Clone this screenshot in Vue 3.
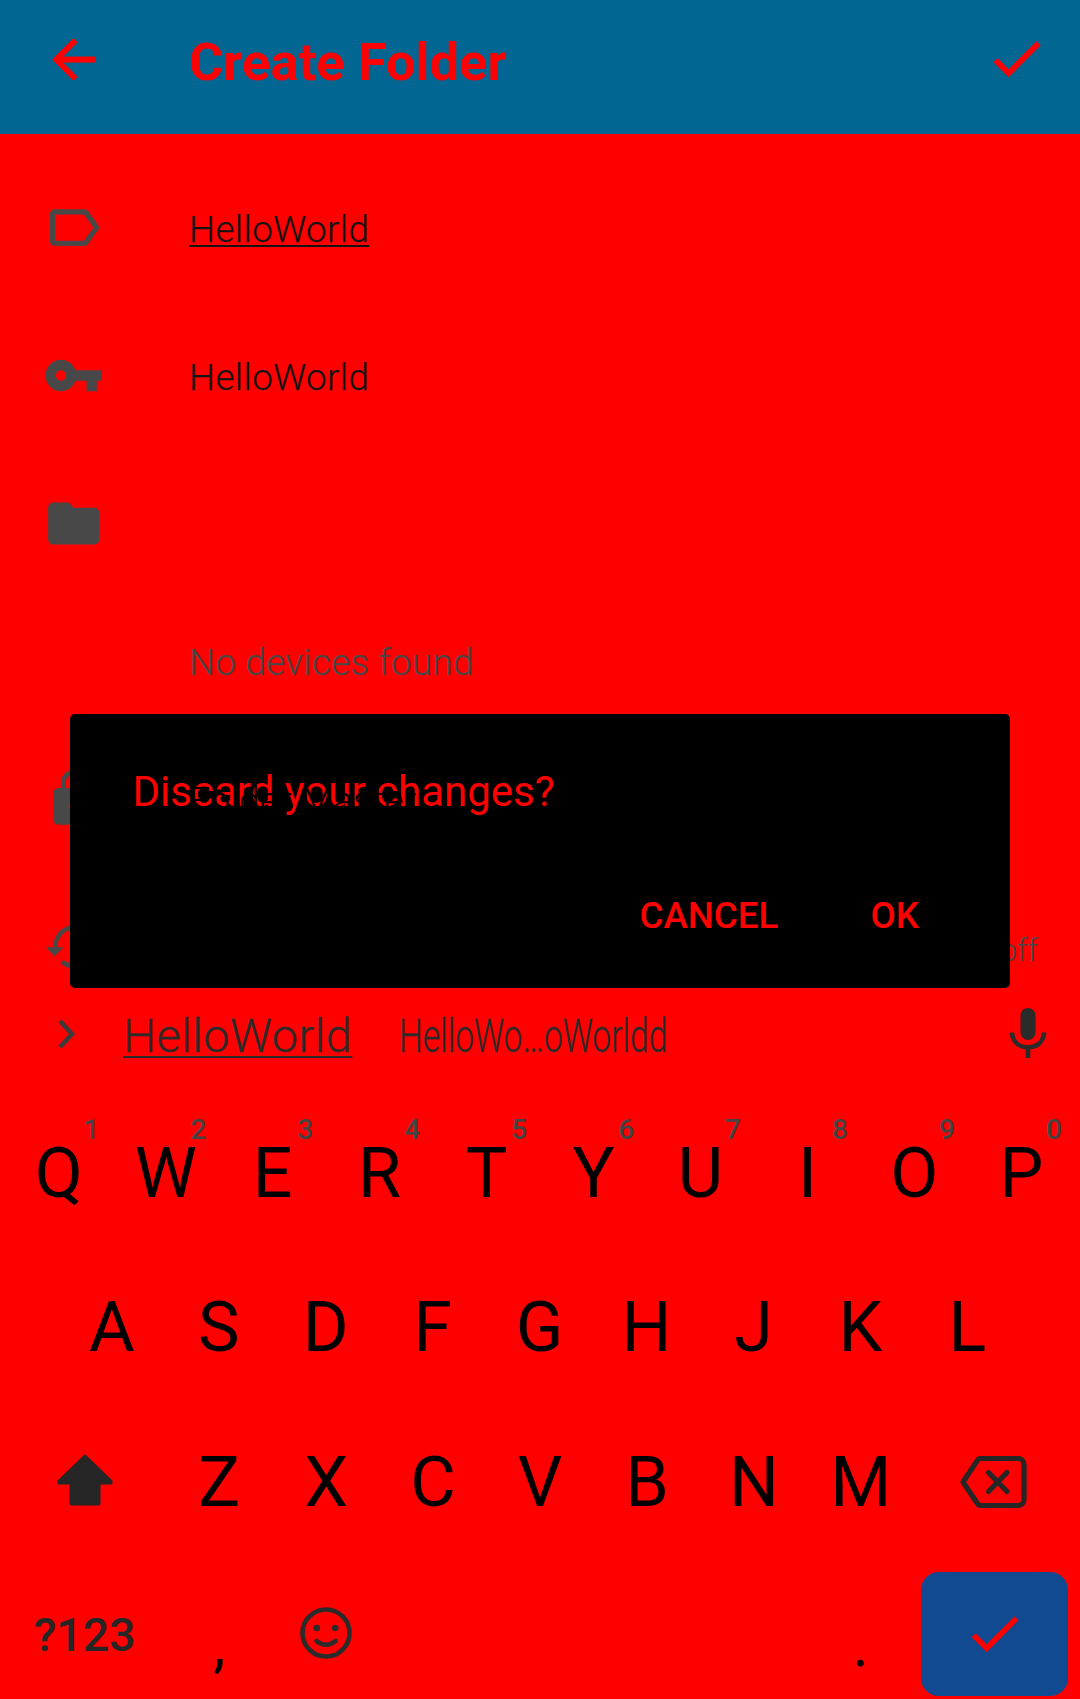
<script setup>
const topRow = [...'QWERTYUIOP'].map((label, i) => ({ label, hint: (i + 1) % 10 }))
const homeRow = [...'ASDFGHJKL']
const lowerRow = [...'ZXCVBNM']
</script>

<template>
  <div class="screen">
    <header class="bar">
      <svg class="icon" viewBox="0 0 24 24"><path d="M20 11H7.83l5.59-5.59L12 4l-8 8 8 8 1.41-1.41L7.83 13H20v-2z" /></svg>
      <h1>Create Folder</h1>
      <svg class="icon save" viewBox="0 0 24 24"><path d="M9 16.17L4.83 12l-1.42 1.41L9 19 21 7l-1.41-1.41z" /></svg>
    </header>

    <main class="form">
      <div class="row">
        <svg class="icon tag" viewBox="0 0 24 24" preserveAspectRatio="none"><path d="M17.63 5.84C17.27 5.33 16.67 5 16 5L5 5.01C3.9 5.01 3 5.9 3 7v10c0 1.1.9 1.99 2 1.99L16 19c.67 0 1.27-.33 1.63-.84L22 12l-4.37-6.16zM16 17H5V7h11l3.55 5L16 17z" /></svg>
        <span class="value underlined">HelloWorld</span>
      </div>
      <div class="row">
        <svg class="icon" viewBox="0 0 24 24" preserveAspectRatio="none"><path d="M12.65 10C11.83 7.67 9.61 6 7 6c-3.31 0-6 2.69-6 6s2.69 6 6 6c2.61 0 4.83-1.67 5.65-4H17v4h4v-4h2v-4H12.65zM7 14c-1.1 0-2-.9-2-2s.9-2 2-2 2 .9 2 2-.9 2-2 2z" /></svg>
        <span class="value">HelloWorld</span>
      </div>
      <div class="row">
        <svg class="icon" viewBox="0 0 24 24" preserveAspectRatio="none"><path d="M10 4H4c-1.1 0-1.99.9-1.99 2L2 18c0 1.1.9 2 2 2h16c1.1 0 2-.9 2-2V8c0-1.1-.9-2-2-2h-8l-2-2z" /></svg>
      </div>
      <div class="row devices"><span class="value muted">No devices found</span></div>
      <div class="row master">
        <svg class="icon" viewBox="0 0 24 24" preserveAspectRatio="none"><path d="M18 8h-1V6c0-2.76-2.24-5-5-5S7 3.24 7 6v2H6c-1.1 0-2 .9-2 2v10c0 1.1.9 2 2 2h12c1.1 0 2-.9 2-2V10c0-1.1-.9-2-2-2zm-6 9c-1.1 0-2-.9-2-2s.9-2 2-2 2 .9 2 2-.9 2-2 2zm3.1-9H8.900V6c0-1.710 1.390-3.100 3.100-3.100 1.710 0 3.100 1.390 3.100 3.100v2z" /></svg>
        <span class="value over">Folder Master</span>
      </div>
      <div class="row versioning">
        <svg class="icon" viewBox="0 0 24 24" preserveAspectRatio="none"><path d="M11.300 3.900a8 8 0 0 0-7.250 8.350H1.100l3.450 3.450L8 12.250H5.750a6.300 6.300 0 0 1 5.550-6.650zM7.900 17l-1.100 1.500a8.500 8.500 0 0 0 5.200 1.800v-1.800a7 7 0 0 1-4.100-1.500z" /></svg>
        <span class="state">off</span>
      </div>
    </main>

    <section class="keyboard">
      <div class="suggestions">
        <svg class="chevron" viewBox="0 0 20 32"><path d="M3 3l12 13L3 29" /></svg>
        <span class="word underlined">HelloWorld</span>
        <span class="slot"><span class="word narrow">HelloWo…oWorldd</span></span>
        <svg class="mic" viewBox="0 0 38 50"><rect x="11.500" y="0" width="15" height="32" rx="7.500" /><path d="M2.800 24.500c1 9.500 7.500 14.700 16.200 14.700s15.200-5.200 16.200-14.700M19 39v11" /></svg>
      </div>
      <div class="keys">
        <span v-for="k in topRow" :key="k.label" class="key">{{ k.label }}<sup>{{ k.hint }}</sup></span>
      </div>
      <div class="keys home">
        <span v-for="k in homeRow" :key="k" class="key">{{ k }}</span>
      </div>
      <div class="keys lower">
        <span class="key wide">
          <svg class="shift" viewBox="0 0 56 52"><path d="M28 1.500L54.500 27v2.500H42.500V49a1.500 1.500 0 0 1-1.500 1.500H15a1.500 1.500 0 0 1-1.500-1.500V29.500H1.500V27z" /></svg>
        </span>
        <span v-for="k in lowerRow" :key="k" class="key">{{ k }}</span>
        <span class="key wide">
          <svg class="erase" viewBox="0 0 67 52"><path d="M20.500 2.500H58a6 6 0 0 1 6 6v35a6 6 0 0 1-6 6H20.500q-2 0-3.200-2L3 26 17.300 4.500q1.200-2 3.200-2z" /><path d="M28.500 16.500l18.500 19M47 16.500l-18.500 19" /></svg>
        </span>
      </div>
      <div class="keys bottom">
        <span class="key wide symbols">?123</span>
        <span class="key mark">,</span>
        <span class="key">
          <svg class="smile" viewBox="0 0 52 52"><circle class="line" cx="26" cy="26" r="23.500" /><circle cx="16.700" cy="21" r="3.300" /><circle cx="35.300" cy="21" r="3.300" /><path class="line" d="M16.500 34q9.500 7.500 19 0" /></svg>
        </span>
        <span class="space"></span>
        <span class="key mark">.</span>
        <span class="enter"><svg viewBox="0 0 24 24"><path d="M9 16.170L4.830 12l-1.420 1.410L9 19 21 7l-1.410-1.410z" /></svg></span>
      </div>
    </section>

    <div class="dialog">
      <p>Discard your changes?</p>
      <div class="actions"><span>CANCEL</span><span>OK</span></div>
    </div>
  </div>
</template>

<style>
body { margin: 0; }
</style>

<style scoped>
.screen {
  position: relative;
  width: 1080px;
  height: 1699px;
  overflow: hidden;
  background: #f00;
  font-family: Roboto, "Liberation Sans", sans-serif;
  color: #000;
}
.icon { width: 63px; height: 63px; flex: none; display: block; }
.bar {
  height: 133.500px;
  box-sizing: border-box;
  padding: 28px 32px 0 42px;
  display: flex;
  align-items: flex-start;
  background: #026693;
  color: #f00;
}
.bar .icon { fill: #f00; }
.bar .icon path { stroke: #f00; stroke-width: .3; }
.bar h1 { margin: 4px 0 0 84px; font-size: 52.500px; line-height: 60px; font-weight: 700; white-space: nowrap; }
.bar .save { margin: -1px 0 0 auto; }
.form { padding-top: 22px; height: 841.500px; }
.row {
  height: 148px;
  box-sizing: border-box;
  padding: 0 42px 0 43px;
  display: flex;
  align-items: center;
}
.row .icon { width: 61.500px; fill: #484848; margin: -5px 1.500px 0 0; }
.row .tag { margin-left: -1px; width: 63px; margin-right: 1px; }
.value { margin: 0 0 0 83px; font-size: 36.750px; line-height: 44px; font-weight: 300; letter-spacing: .42px; -webkit-text-stroke: .25px currentColor; color: #141414; white-space: nowrap; }
.underlined { text-decoration: underline; text-decoration-thickness: 2px; text-underline-offset: 3px; text-decoration-skip-ink: none; }
.devices { height: 126px; }
.devices .value { margin-left: 146px; letter-spacing: .3px; }
.value.muted { color: #484848; }
.master { height: 151px; }
.value.over { position: relative; z-index: 3; color: #000; letter-spacing: .3px; }
.versioning { height: 120.500px; padding-top: 20px; }
.versioning .icon { margin-top: -1px; }
.state { margin: 9px 0 0 auto; font-size: 31.500px; line-height: 36px; font-weight: 300; color: #484848; }

.suggestions { height: 77px; padding: 0 33px 0 57px; display: flex; align-items: center; }
.chevron { width: 20px; height: 32px; margin-top: -3px; flex: none; fill: none; stroke: #3b3b3b; stroke-width: 4.500; }
.word { font-size: 46.700px; line-height: 56px; color: #2b2b2b; font-weight: 300; white-space: nowrap; -webkit-text-stroke: .3px currentColor; }
.suggestions > .word { width: 229px; margin: 0 0 0 46px; text-underline-offset: 4px; letter-spacing: .55px; }
.slot { width: 268px; margin: 0 0 0 46.500px; }
.narrow { display: inline-block; transform: scaleX(.719); transform-origin: left; }
.mic { width: 38px; height: 50px; margin: -5px 0 0 auto; flex: none; fill: #2b2b2b; }
.mic path { fill: none; stroke: #2b2b2b; stroke-width: 4.600; }
.keys { height: 155px; padding: 0 5.400px; display: flex; align-items: center; }
.suggestions + .keys { margin-top: 21.500px; }
.key { position: relative; width: 106.950px; flex: none; text-align: center; font-size: 70px; line-height: 82px; }
.key sup { position: absolute; left: 79px; top: -19px; width: 14px; display: flex; justify-content: center; font-size: 28px; line-height: 34px; font-weight: 500; color: #444; }
.home { padding-left: 58.400px; }
.home .key, .lower .key { margin-top: -3px; }
.wide { width: 160.400px; display: flex; justify-content: center; }
.shift { width: 56px; height: 52px; margin: -4px 1px 0 0; fill: #262626; stroke: #262626; stroke-width: 2; stroke-linejoin: round; }
.erase { width: 67px; height: 52px; margin: 1px 0 0 -2px; fill: none; stroke: #262626; stroke-width: 5.200; stroke-linecap: round; stroke-linejoin: round; }
.bottom { height: 138.500px; }
.symbols { font-size: 46.500px; font-weight: 500; color: #262626; padding: 10px 2px 0 0; box-sizing: border-box; }
.mark { font-size: 62px; padding-top: 30px; }
.smile { display: block; width: 52px; height: 52px; margin: 7px auto 0; fill: #2b2b2b; }
.smile .line { fill: none; stroke: #2b2b2b; stroke-width: 4.600; stroke-linecap: round; }
.space { flex: 1; }
.enter { width: 147px; height: 124px; margin: 9px 6.500px 0 7px; border-radius: 18px; background: #124a91; display: flex; align-items: center; justify-content: center; }
.enter svg { width: 63px; height: 63px; margin-top: -2px; fill: #f00; stroke: #f00; stroke-width: .2; }
.dialog {
  position: absolute;
  z-index: 2;
  left: 70px;
  top: 714px;
  width: 940px;
  height: 274px;
  box-sizing: border-box;
  padding: 53px 91px 0 62.500px;
  border-radius: 5px;
  background: #000;
  color: #f00;
}
.dialog p { margin: 0; font-size: 42px; line-height: 50px; white-space: nowrap; }
.actions { display: flex; justify-content: flex-end; gap: 92px; margin-top: 77px; font-size: 36.750px; line-height: 44px; font-weight: 500; }
</style>
